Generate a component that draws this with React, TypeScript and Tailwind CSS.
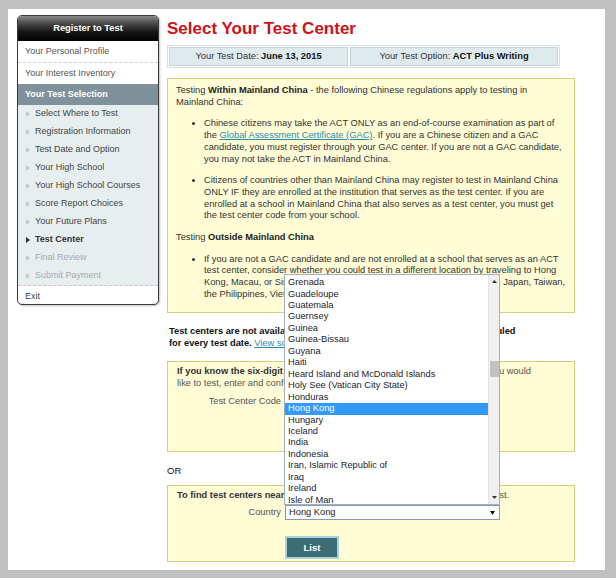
import React from "react";

const countries = [
  "Grenada",
  "Guadeloupe",
  "Guatemala",
  "Guernsey",
  "Guinea",
  "Guinea-Bissau",
  "Guyana",
  "Haiti",
  "Heard Island and McDonald Islands",
  "Holy See (Vatican City State)",
  "Honduras",
  "Hong Kong",
  "Hungary",
  "Iceland",
  "India",
  "Indonesia",
  "Iran, Islamic Republic of",
  "Iraq",
  "Ireland",
  "Isle of Man",
];

const steps = [
  { label: "Select Where to Test", state: "done" },
  { label: "Registration Information", state: "done" },
  { label: "Test Date and Option", state: "done" },
  { label: "Your High School", state: "done" },
  { label: "Your High School Courses", state: "done" },
  { label: "Score Report Choices", state: "done" },
  { label: "Your Future Plans", state: "done" },
  { label: "Test Center", state: "current" },
  { label: "Final Review", state: "todo" },
  { label: "Submit Payment", state: "todo" },
];

function Arrow({ dark }: { dark?: boolean }) {
  return (
    <svg width="4" height="6" viewBox="0 0 4 6" className="shrink-0">
      <path d="M0 0 L4 3 L0 6 Z" fill={dark ? "#333" : "#c4c8ca"} />
    </svg>
  );
}

function Sidebar() {
  return (
    <div className="mt-[6px] w-[142px] h-[290px] shrink-0 rounded-[5px] border border-[#3a3a3a] overflow-hidden bg-white shadow-[1px_1px_2px_rgba(0,0,0,0.25)] text-[9px]">
      <div className="h-[25px] flex items-center justify-center text-white font-bold text-[9.3px] bg-[linear-gradient(to_bottom,#8a8a8a_0%,#4a4a4a_30%,#1a1a1a_60%,#000_100%)]">
        Register to Test
      </div>
      <div className="h-[22px] flex items-center pl-[7px] text-[#555] border-b border-dashed border-[#cfcfcf]">
        Your Personal Profile
      </div>
      <div className="h-[21px] flex items-center pl-[7px] text-[#555]">Your Interest Inventory</div>
      <div className="h-[21px] flex items-center pl-[7px] text-white font-bold bg-[#7f929c]">
        Your Test Selection
      </div>
      <div className="bg-[#e7eef0] border-b border-dashed border-[#c9c9c9]">
        {steps.map((s) => (
          <div key={s.label} className="h-[18px] flex items-center gap-[5px] pl-[8px]">
            <Arrow dark={s.state === "current"} />
            <span
              className={
                s.state === "current"
                  ? "font-bold text-[#333]"
                  : s.state === "todo"
                  ? "text-[#a8abad]"
                  : "text-[#444]"
              }
            >
              {s.label}
            </span>
          </div>
        ))}
      </div>
      <div className="h-[21px] flex items-center pl-[7px] text-[#444]">Exit</div>
    </div>
  );
}

function CountryDropdown() {
  return (
    <div className="absolute bottom-full left-[-1px] w-[216px] h-[231px] bg-white border border-[#9fb1c6] overflow-hidden z-10 flex">
      <div className="flex-1 pt-[2px] text-[9.3px] leading-[11.45px] text-[#1c1c2e]">
        {countries.map((c) => (
          <div
            key={c}
            className={
              c === "Hong Kong"
                ? "pl-[3px] bg-[#3399ff] text-white"
                : "pl-[3px]"
            }
          >
            {c}
          </div>
        ))}
      </div>
      <div className="w-[11px] bg-[#f0f0f0] border-l border-[#e4e4e4] flex flex-col items-center">
        <svg width="5" height="3" viewBox="0 0 5 3" className="mt-[5px]">
          <path d="M0 3 L2.5 0 L5 3 Z" fill="#333" />
        </svg>
        <div className="mt-[78px] w-[9px] h-[16px] bg-[#c2c2c2]" />
        <div className="flex-1" />
        <svg width="5" height="3" viewBox="0 0 5 3" className="mb-[5px]">
          <path d="M0 0 L5 0 L2.5 3 Z" fill="#333" />
        </svg>
      </div>
    </div>
  );
}

export default function App() {
  return (
    <div
      className="w-[616px] h-[578px] bg-[#c0c0c0] pt-[9px] pl-[8px] pr-[11px] pb-[8px] overflow-hidden"
      style={{ fontFamily: '"Liberation Sans", Arial, sans-serif' }}
    >
      <div className="h-full bg-white flex gap-[8px] pl-[9px]">
        <Sidebar />

        <div className="w-[408px] pt-[10px] text-[#333] text-[9.3px]">
          <h1 className="text-[17px] leading-[20px] font-bold text-[#d0111b]">Select Your Test Center</h1>

          <div className="mt-[6px] w-[393px] h-[23px] flex gap-[2px] p-[1px] border border-[#d3e0e6]">
            <div className="w-[179px] flex items-center justify-center bg-[#dfeaef] border border-[#c5d4db]">
              Your Test Date:&nbsp;<b className="text-[#111]">June 13, 2015</b>
            </div>
            <div className="flex-1 flex items-center justify-center bg-[#dfeaef] border border-[#c5d4db]">
              Your Test Option:&nbsp;<b className="text-[#111]">ACT Plus Writing</b>
            </div>
          </div>

          <div className="mt-[10px] h-[235px] bg-[#fffcd6] border border-[#d8cd7a] pt-[6px] pl-[8px] pr-[10px] leading-[11.7px]">
            <p>
              Testing <b className="text-[#222]">Within Mainland China</b> - the following Chinese regulations apply to
              testing in Mainland China:
            </p>
            <ul className="list-disc pl-[28px] my-[10px] space-y-[10px]">
              <li>
                Chinese citizens may take the ACT ONLY as an end-of-course examination as part of the{" "}
                <span className="underline text-[#2a8bb0]">Global Assessment Certificate (GAC)</span>. If you are a
                Chinese citizen and a GAC candidate, you must register through your GAC center. If you are not a GAC
                candidate, you may not take the ACT in Mainland China.
              </li>
              <li>
                Citizens of countries other than Mainland China may register to test in Mainland China ONLY IF they
                are enrolled at the institution that serves as the test center. If you are enrolled at a school in
                Mainland China that also serves as a test center, you must get the test center code from your school.
              </li>
            </ul>
            <p>
              Testing <b className="text-[#222]">Outside Mainland China</b>
            </p>
            <ul className="list-disc pl-[28px] mt-[10px]">
              <li className="mr-[-6px]">
                If you are not a GAC candidate and are not enrolled at a school that serves as an ACT test center,
                consider whether you could test in a different location by traveling to Hong Kong, Macau, or Singapore,
                or to other nearby countries such as Korea, Japan, Taiwan, the Philippines, Vietnam, or Thailand.
              </li>
            </ul>
          </div>

          <p className="mt-[13px] font-bold text-[#111] leading-[11.7px] pl-[2px]">
            Test centers are not available in all areas, and some centers are not scheduled
            <br />
            for every test date. <span className="underline font-normal text-[#2a8bb0]">View schedule</span>
          </p>

          <div className="mt-[12px] h-[91px] bg-[#fffcd6] border border-[#d8cd7a] pt-[4px] pl-[9px] leading-[11.7px] text-[#555]">
            <p>
              <b className="text-[#333]">If you know the six-digit code</b> that is assigned to the testing center
              where you would
              <br />
              like to test, enter and confirm it below.
            </p>
            <div className="mt-[5px] flex items-center">
              <span className="w-[108px] text-right pr-[4px]">Test Center Code</span>
              <div className="w-[80px] h-[15px] border border-[#7f9db9] bg-white" />
            </div>
          </div>

          <div className="mt-[13px] leading-[12px] text-[#111] text-[9.5px]">OR</div>

          <div className="mt-[8px] h-[77px] bg-[#fffcd6] border border-[#d8cd7a] pt-[4px] pl-[9px] leading-[11.7px] text-[#555]">
            <p>
              <b className="text-[#333]">To find test centers near you,</b> select the country in which you would like
              to test.
            </p>
            <div className="mt-[3px] flex items-center">
              <span className="w-[108px] text-right pr-[4px]">Country</span>
              <div className="relative">
                <CountryDropdown />
                <div className="w-[215px] h-[15px] border border-[#7f9db9] bg-white flex items-center justify-between pl-[3px] pr-[4px] text-[#222]">
                  <span>Hong Kong</span>
                  <svg width="5" height="4" viewBox="0 0 5 4">
                    <path d="M0 0 L5 0 L2.5 4 Z" fill="#111" />
                  </svg>
                </div>
              </div>
            </div>
            <div className="mt-[16px] ml-[108px] w-[54px] h-[23px] p-[2px] bg-[#a6d3d8]">
              <div className="h-full bg-[#3b6d76] flex items-center justify-center text-white font-bold text-[9.5px]">
                List
              </div>
            </div>
          </div>
        </div>
      </div>
    </div>
  );
}
